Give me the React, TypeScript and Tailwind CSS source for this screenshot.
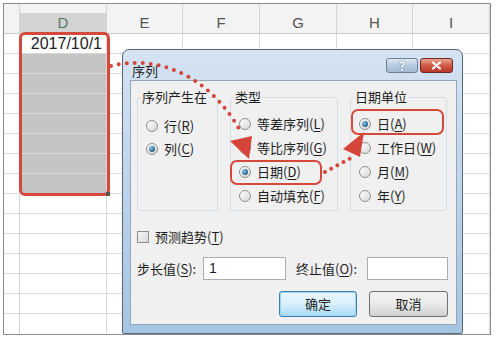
import React from "react"

const cols = [
  { name: "D", w: 87 },
  { name: "E", w: 76 },
  { name: "F", w: 77 },
  { name: "G", w: 77 },
  { name: "H", w: 76 },
  { name: "I", w: 77 },
]

const rows = Array.from({ length: 15 }, (_, i) => i)

function Key({ k }: { k: string }) {
  return (
    <>
      (<span className="underline underline-offset-2">{k}</span>)
    </>
  )
}

function Radio({ checked, children }: { checked?: boolean; children: React.ReactNode }) {
  return (
    <div className="flex items-center gap-[6px]">
      <span className="w-[12px] h-[12px] rounded-full border border-[#8e8f8f] bg-gradient-to-br from-[#ffffff] to-[#d6d6d6] flex items-center justify-center shrink-0">
        {checked && (
          <span className="w-[6px] h-[6px] rounded-full bg-[radial-gradient(circle_at_35%_35%,#8ec5ea,#1f5d8c_70%)]" />
        )}
      </span>
      <span>{children}</span>
    </div>
  )
}

function Group({ label, width, children, rowH }: { label: string; width: number; children: React.ReactNode; rowH: string }) {
  return (
    <fieldset className="border border-[#d5dde5] rounded-[3px] h-[123px]" style={{ width }}>
      <legend className="ml-[3px] px-[1px] leading-[18px]">{label}</legend>
      <div className={"flex flex-col pl-[8px] " + rowH}>{children}</div>
    </fieldset>
  )
}

export default function App() {
  return (
    <div className="relative w-[499px] h-[340px] bg-white overflow-hidden" style={{ fontFamily: '"Noto Sans CJK SC", "Noto Sans", sans-serif' }}>
      {/* spreadsheet */}
      <div className="ml-[3px] mt-[3px] w-[488px] border border-[#8c8c8c] bg-white" style={{ fontFamily: '"Liberation Sans", Arial, sans-serif' }}>
        <div className="flex h-[30px] bg-[#f3f3f3] border-b border-[#c9c9c9]">
          <div className="w-[16px] border-r border-[#d4d4d4]" />
          {cols.map((c) => (
            <div key={c.name} className="flex flex-col justify-end border-r border-[#d4d4d4]" style={{ width: c.w }}>
              <div
                className={
                  "h-[20px] flex items-center justify-center text-[15px] " +
                  (c.name === "D" ? "bg-[#d3d3d3] text-[#4f7a62]" : "text-[#555]")
                }
              >
                {c.name}
              </div>
            </div>
          ))}
        </div>
        {rows.map((r) => (
          <div key={r} className={"flex h-[20px] " + (r < 14 ? "border-b border-[#d9d9d9]" : "")}>
            <div className="w-[16px] border-r border-[#d4d4d4]" />
            {cols.map((c) => {
              const sel = c.name === "D" && r > 0 && r < 8
              return (
                <div
                  key={c.name}
                  className={
                    "border-r border-[#d9d9d9] flex items-center justify-end pr-[4px] text-[16px] text-[#222] " +
                    (sel ? "bg-[#c4c4c4]" : "")
                  }
                  style={{ width: c.w }}
                >
                  {c.name === "D" && r === 0 ? "2017/10/1" : ""}
                </div>
              )
            })}
          </div>
        ))}
      </div>

      {/* selection highlight */}
      <div className="absolute left-[19px] top-[32px] w-[91px] h-[164px] border-[3px] border-[#d4493c] rounded-[6px]" />
      <div className="absolute left-[106px] top-[192px] w-[4px] h-[4px] bg-[#555]" />

      {/* dialog */}
      <div className="absolute left-[122px] top-[49px] w-[341px] h-[285px] rounded-t-[7px] rounded-b-[2px] border border-[#56687a] bg-gradient-to-b from-[#d5e3f2] via-[#bcd3eb] to-[#a6c4e3] flex flex-col text-[13px] text-[#1e1e1e]">
        <div className="h-[30px] flex justify-between pl-[9px] pr-[9px]">
          <div className="mt-[13px] leading-[16px]">序列</div>
          <div className="flex gap-[2px] mt-[8px]">
            <div className="w-[32px] h-[15px] rounded-[3px] border border-[#6d7f93] bg-gradient-to-b from-[#dfe9f4] via-[#b8cbe0] to-[#a3bad3] flex items-center justify-center text-[12px] leading-none text-white font-bold" style={{ textShadow: "0 0 2px #3c5a7a" }}>
              ?
            </div>
            <div className="w-[33px] h-[15px] rounded-[3px] border border-[#6e2a22] bg-gradient-to-b from-[#e8a393] via-[#d05a44] to-[#b9382a] flex items-center justify-center">
              <svg width="11" height="9" viewBox="0 0 11 9">
                <path d="M2 1.5 L9 7.5 M9 1.5 L2 7.5" stroke="white" strokeWidth="2.2" strokeLinecap="round" />
              </svg>
            </div>
          </div>
        </div>

        <div className="ml-[7px] w-[327px] h-[245px] bg-[#f0f0f0] border border-[#93a7bc] pl-[6px] pr-[8px] pt-[7px]">
          <div className="flex gap-[12px]">
            <Group label="序列产生在" width={81} rowH="pt-[8px] [&>div]:h-[23px]">
              <Radio>行<Key k="R" /></Radio>
              <Radio checked>列<Key k="C" /></Radio>
            </Group>
            <Group label="类型" width={108} rowH="pt-[6px] [&>div]:h-[24px]">
              <Radio>等差序列<Key k="L" /></Radio>
              <Radio>等比序列<Key k="G" /></Radio>
              <Radio checked>日期<Key k="D" /></Radio>
              <Radio>自动填充<Key k="F" /></Radio>
            </Group>
            <Group label="日期单位" width={97} rowH="pt-[6px] [&>div]:h-[24px]">
              <Radio checked>日<Key k="A" /></Radio>
              <Radio>工作日<Key k="W" /></Radio>
              <Radio>月<Key k="M" /></Radio>
              <Radio>年<Key k="Y" /></Radio>
            </Group>
          </div>

          <div className="mt-[19px] flex items-center gap-[6px] h-[14px]">
            <span className="w-[12px] h-[12px] border border-[#8e8f8f] bg-gradient-to-br from-[#f4f4f4] to-[#dcdcdc]" />
            <span>预测趋势<Key k="T" /></span>
          </div>

          <div className="mt-[13px] flex items-center h-[23px]">
            <span className="w-[66px]">步长值<Key k="S" />:</span>
            <div className="w-[83px] h-[23px] bg-white border border-[#abadb3] flex items-center pl-[5px] text-[14px]" style={{ fontFamily: '"Liberation Sans", Arial, sans-serif' }}>
              1
            </div>
            <span className="ml-[10px] w-[71px]">终止值<Key k="O" />:</span>
            <div className="w-[81px] h-[23px] bg-white border border-[#abadb3]" />
          </div>

          <div className="mt-[11px] flex justify-end gap-[12px]">
            <div className="w-[78px] h-[26px] rounded-[3px] border border-[#3c7fb1] bg-gradient-to-b from-[#eaf6fd] via-[#d9f0fc] to-[#a7d9f5] shadow-[inset_0_0_0_1px_#9fd4f0] flex items-center justify-center">
              确定
            </div>
            <div className="w-[79px] h-[26px] rounded-[3px] border border-[#707070] bg-gradient-to-b from-[#f2f2f2] via-[#ebebeb] to-[#cfcfcf] flex items-center justify-center">
              取消
            </div>
          </div>
        </div>
      </div>

      {/* annotations */}
      <div className="absolute left-[230px] top-[160px] w-[92px] h-[25px] border-[2.5px] border-[#d4493c] rounded-[7px]" />
      <div className="absolute left-[351px] top-[109px] w-[93px] h-[26px] border-[2.5px] border-[#d4493c] rounded-[7px]" />
      <svg className="absolute left-0 top-0 pointer-events-none" width="499" height="340" viewBox="0 0 499 340">
        <path d="M111 66 C150 56, 205 68, 241 132" fill="none" stroke="#d6453a" strokeWidth="4" strokeLinecap="round" strokeDasharray="0 8" />
        <polygon points="230,141 252,136 249,159" fill="#d6453a" />
        <path d="M325 172 L351 158" fill="none" stroke="#d6453a" strokeWidth="4" strokeLinecap="round" strokeDasharray="0 7" />
        <polygon points="343,149 360,157 364,132" fill="#d6453a" />
      </svg>
    </div>
  )
}
